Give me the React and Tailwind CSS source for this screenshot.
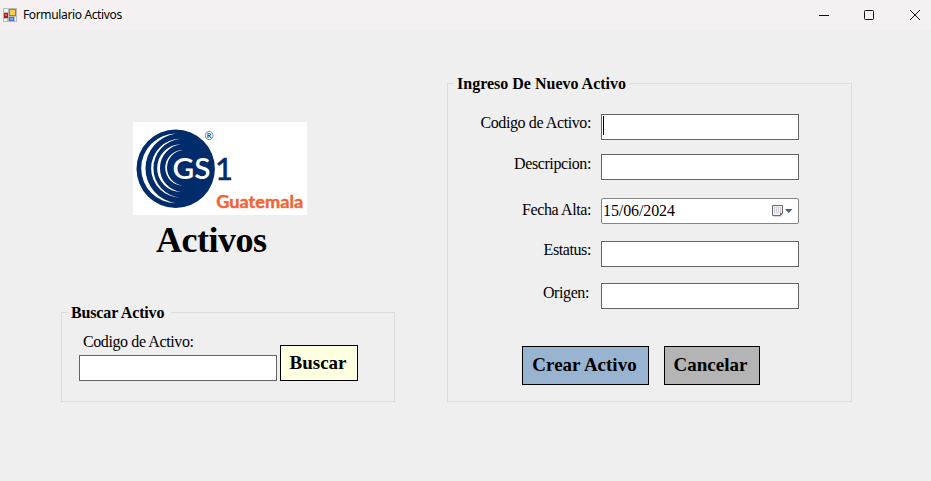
const serif = "font-['Liberation_Serif','Times_New_Roman',serif]";

function AppIcon() {
  return (
    <svg width="14" height="14" viewBox="0 0 14 14" shapeRendering="crispEdges">
      <rect width="14" height="14" fill="#b9b9b9" />
      <rect x="1" y="1" width="4" height="3" fill="#f4f4f4" />
      <rect x="1" y="11" width="3" height="2" fill="#f4f4f4" />
      <rect x="1" y="5" width="4" height="5" fill="#b01a1a" />
      <rect x="2" y="6" width="2" height="2" fill="#ee5a4c" />
      <rect x="6" y="1" width="7" height="7" fill="#b87a08" />
      <rect x="7" y="2" width="5" height="5" fill="#fbcf4a" />
      <rect x="6" y="9" width="5" height="4" fill="#3c70d0" />
      <rect x="7" y="10" width="3" height="2" fill="#7aa8f2" />
      <rect x="12" y="9" width="1" height="4" fill="#f4f4f4" />
    </svg>
  );
}

function WindowControls() {
  return (
    <svg width="104" height="14" viewBox="0 0 104 14" fill="none" stroke="#111" className="mr-[9px]">
      <path d="M1 7.5h10" />
      <rect x="46.5" y="2.5" width="9" height="9" rx="1" />
      <path d="M92 2l10 10M102 2l-10 10" />
    </svg>
  );
}

function Logo() {
  return (
    <svg width="174" height="93" viewBox="0 0 174 93" className="block bg-white">
      <circle cx="42.7" cy="46.7" r="39.2" fill="#002c6c" />
      <g fill="#fff">
        <path d="M43 11.6A34.8 34.8 0 0 0 43 81.2A35.1 35.1 0 0 1 43 11.6Z" />
        <path d="M47.5 16.8A29.4 29.4 0 0 0 47.5 75.6A29.5 29.5 0 0 1 47.5 16.8Z" />
        <path d="M48 22.3A23.900 23.900 0 0 0 48 70.1A24.1 24.1 0 0 1 48 22.3Z" />
        <path d="M50 28A17.8 17.8 0 0 0 50 63.6A17.9 17.9 0 0 1 50 28Z" />
      </g>
      <g className="font-['Lato',sans-serif]">
        <text x="39.5" y="56.7" fontSize="29" fontWeight="600" fill="#fff" stroke="#002c6c" strokeWidth="2" paintOrder="stroke" textLength="38" lengthAdjust="spacingAndGlyphs">GS</text>
        <text x="82" y="57.5" fontSize="31" fontWeight="500" fill="#002c6c" stroke="#002c6c" strokeWidth=".4">1</text>
        <text x="71.5" y="18" fontSize="11" fill="#002c6c">®</text>
      </g>
      <text x="83.2" y="86" fontSize="16.5" fontWeight="700" fill="#f26334" stroke="#f26334" strokeWidth=".4" textLength="87" lengthAdjust="spacingAndGlyphs" className="font-['Lato',sans-serif]">Guatemala</text>
    </svg>
  );
}

function Label({ children, className = "" }) {
  return <label className={`block whitespace-nowrap text-[16px] leading-[18px] tracking-[-0.4px] ${className}`}>{children}</label>;
}

function Field({ label, className = "", labelClass = "", children }) {
  return (
    <div className={`flex h-[26px] ${className}`}>
      <div className="flex w-[153px] shrink-0 justify-end pr-[10px]">
        <Label className={labelClass}>{label}</Label>
      </div>
      {children || <div className="w-[198px] border border-[#646464] bg-white" />}
    </div>
  );
}

function CalendarIcon() {
  return (
    <svg width="22" height="14" viewBox="0 0 22 14">
      <path d="M2 12.5h8l2-2" stroke="#ddd5d5" fill="none" />
      <path d="M1.5 1.5h10v8l-2 2h-8z" fill="#eef0f4" stroke="#766767" />
      <path d="M9 11.5V9h2.5z" fill="#766767" />
      <path d="M3 4h7M3 6h7M3 8h7" stroke="#a3abbd" strokeDasharray="1 1" />
      <path d="M14 5h7.500l-3.750 4z" fill="#44608c" />
    </svg>
  );
}

export default function App() {
  return (
    <div className={`flex h-[481px] w-[931px] flex-col overflow-hidden bg-[#efefef] text-black ${serif}`}>
      <header className="flex h-[30px] shrink-0 items-center bg-[#f5f1f3] pl-[3px]">
        <AppIcon />
        <span className="ml-[6px] grow font-['Noto_Sans',sans-serif] text-[12px] leading-[16px] tracking-[-0.36px]">Formulario Activos</span>
        <WindowControls />
      </header>
      <main className="flex pl-[61px]">
        <section className="w-[334px] pt-[92px]">
          <div className="ml-[72px] w-[174px]">
            <Logo />
          </div>
          <h1 className="ml-[95px] mt-[4px] text-[36px] font-bold leading-[42px] tracking-[-0.5px]">Activos</h1>
          <fieldset className="mt-[42px] h-[99px] border border-[#dcdcdc]">
            <legend className="ml-[6px] h-[19px] w-[103px] whitespace-nowrap pl-[3px] text-[16px] font-bold leading-[19px] tracking-[-0.15px]">Buscar Activo</legend>
            <div className="flex items-end gap-[3px] pl-[17px]">
              <div className="pt-[11px]">
                <Label className="pl-[4px]">Codigo de Activo:</Label>
                <div className="mt-[4px] h-[26px] w-[198px] border border-[#646464] bg-white" />
              </div>
              <button className="h-[36px] w-[78px] border border-black bg-[#ffffe1] pr-[2px] text-[19px] font-bold leading-[34px]">Buscar</button>
            </div>
          </fieldset>
        </section>
        <section className="ml-[52px] pt-[44px]">
          <fieldset className="h-[328px] w-[405px] border border-[#dcdcdc]">
            <legend className="ml-[6px] h-[19px] w-[175px] whitespace-nowrap pl-[3px] text-[16px] font-bold leading-[19px]">Ingreso De Nuevo Activo</legend>
            <Field label="Codigo de Activo:" className="mt-[21px]">
              <div className="w-[198px] border border-[#646464] bg-white pl-[1px] pt-[1px]">
                <div className="h-[19px] w-px bg-black" />
              </div>
            </Field>
            <Field label="Descripcion:" className="mt-[14px]" labelClass="mt-[1px]" />
            <Field label="Fecha Alta:" className="mt-[18px]" labelClass="mt-[3px]">
              <div className="flex w-[198px] items-center justify-between rounded-[2px] border border-[#858585] bg-white pl-[1px] pr-[5px]">
                <span className="text-[16px] leading-[18px] tracking-[-0.1px]">15/06/2024</span>
                <CalendarIcon />
              </div>
            </Field>
            <Field label="Estatus:" className="mt-[17px]" />
            <Field label="Origen:" className="mt-[16px]" labelClass="mt-[1px] mr-[2px]" />
            <div className="mt-[37px] flex gap-[15px] pl-[74px]">
              <button className="h-[39px] w-[127px] border border-black bg-[#99b4d1] pr-[2px] text-[19px] font-bold">Crear Activo</button>
              <button className="h-[39px] w-[96px] border border-black bg-[#b4b4b4] pr-[3px] text-[19px] font-bold">Cancelar</button>
            </div>
          </fieldset>
        </section>
      </main>
    </div>
  );
}
